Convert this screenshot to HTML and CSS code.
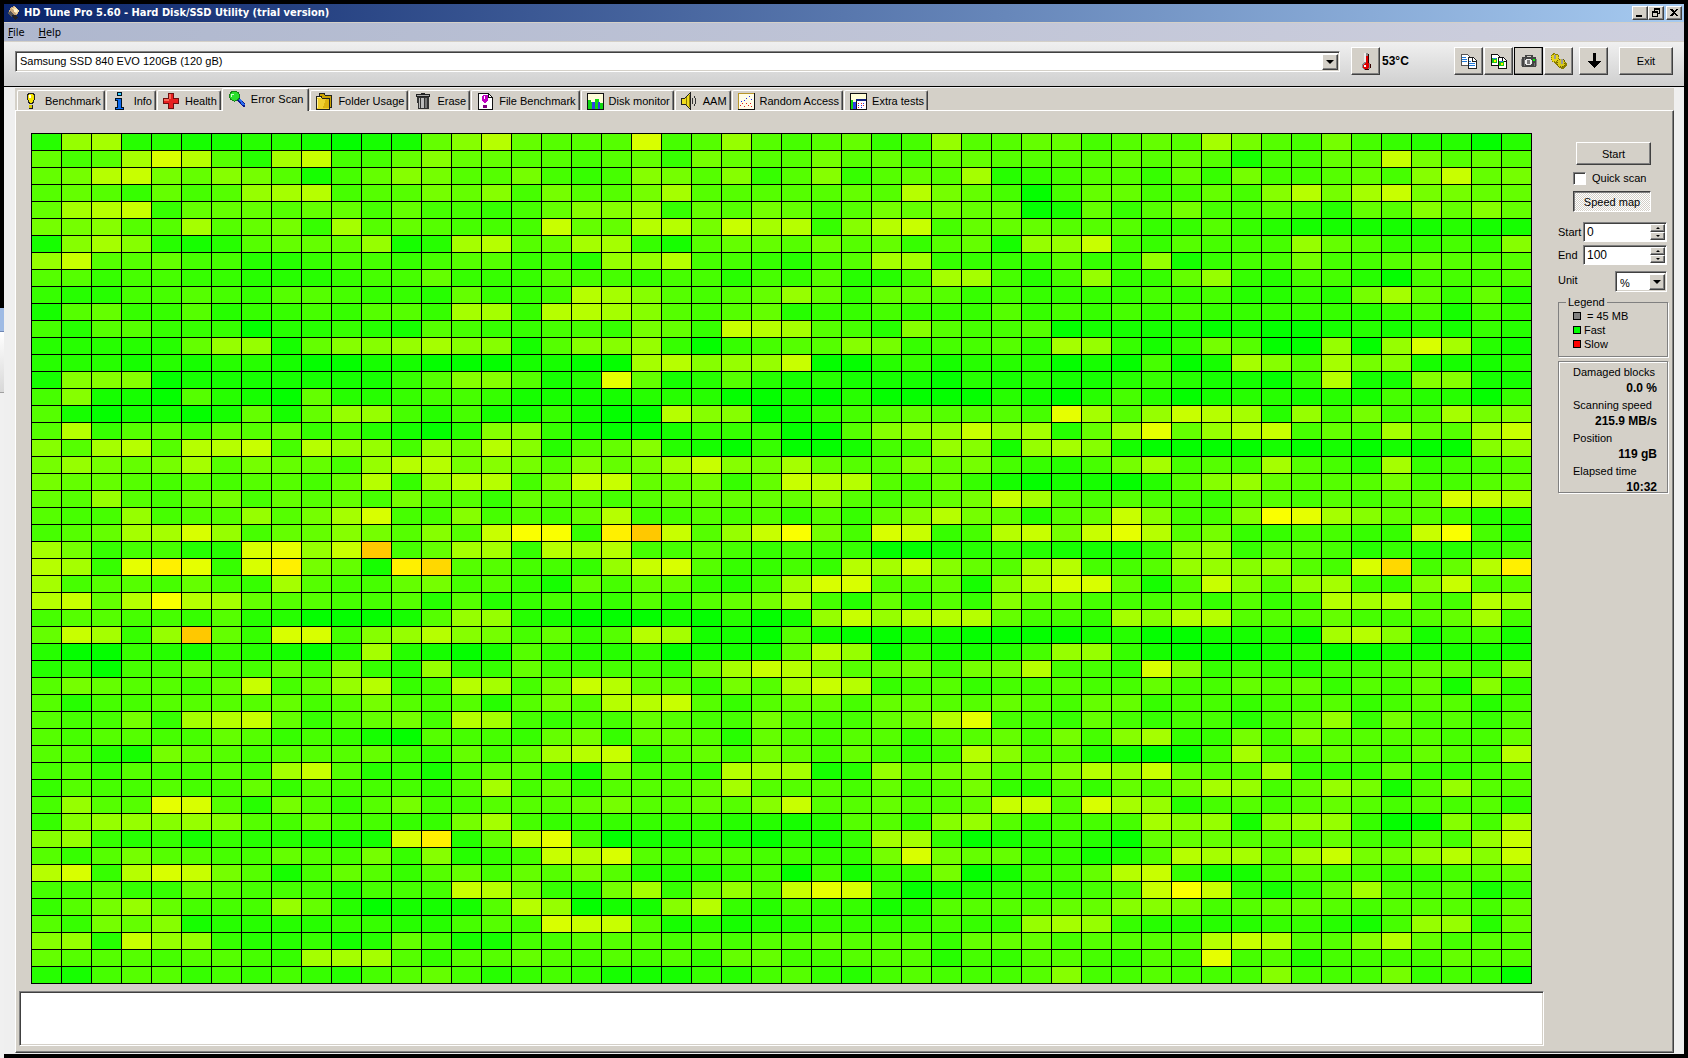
FILE: index.html
```html
<!DOCTYPE html>
<html lang="en">
<head>
<meta charset="utf-8">
<title>HD Tune Pro 5.60</title>
<link rel="stylesheet" href="styles.css">
</head>
<body>
<div class="desktop">
  <div class="behind"><span class="behind-title"></span><span class="behind-bar"></span><span class="behind-body"></span></div>
  <div class="window">
    <header class="titlebar">
      <svg class="app-icon" viewBox="0 0 14 14" width="14" height="14"><path d="M3 2l4-2 5 4-2 5-4 1-4-4z" fill="#c9a77c"/><path d="M5 2l3-1 4 4-3 3z" fill="#f1d9a4"/><path d="M7 3h3v3H7z" fill="#fff3cf"/><path d="M0 7l4-2 3 4-3 2z" fill="#555"/><path d="M5 9h4l2 3-3 2z" fill="#222"/></svg>
      <h1>HD Tune Pro 5.60 - Hard Disk/SSD Utility (trial version)</h1>
      <div class="win-buttons">
        <button class="raised" aria-label="Minimize"><svg viewBox="0 0 10 10" width="10" height="10"><path d="M1 7h6v2H1z"/></svg></button>
        <button class="raised" aria-label="Restore"><svg viewBox="0 0 10 10" width="10" height="10"><path d="M3 0h6v6H7V5h1V2H4v1H3zM1 3h6v6H1zm1 2v3h4V5z" fill-rule="evenodd"/></svg></button>
        <button class="raised close" aria-label="Close"><svg viewBox="0 0 10 10" width="10" height="10"><path d="M1 1h2l2 2 2-2h2L6 4.500l3 3.500H7L5 6 3 8H1l3-3.500z"/></svg></button>
      </div>
    </header>
    <nav class="menubar"><a href="#file"><u>F</u>ile</a><a href="#help"><u>H</u>elp</a></nav>
    <div class="toolbar">
      <div class="combo drive">
        <select aria-label="Drive"><option>Samsung SSD 840 EVO 120GB (120 gB)</option></select>
        <span class="drop raised"></span>
      </div>
      <button class="tool raised" aria-label="Temperature"><svg viewBox="0 0 16 18" width="16" height="18"><path d="M6 1h4v9l2 2v4l-2 2H6l-2-2v-4l2-2z" fill="#888"/><path d="M6 1h2v9H6z" fill="#eee"/><path d="M8 4h2v7l1 1v4l-2 1H6l-1-1v-3l3-2z" fill="#e00000"/><path d="M10 2h1v9h-1zM12 12h1v4h-1zM7 17h4v1H7z" fill="#300"/><path d="M6 13h2v2H6z" fill="#fff"/></svg></button>
      <output class="temp">53°C</output>
      <div class="tools">
        <button class="tool raised" aria-label="Copy text"><svg viewBox="0 0 17 16" width="17" height="16"><path d="M1 1h6l2 2v9H1z" fill="#fff" stroke="#555"/><path d="M8 4h5l3 3v8H8z" fill="#fff" stroke="#222"/><path d="M12 4v4h4" fill="none" stroke="#222"/><path d="M2 4h4v1H2zM2 6h5v1H2zM2 8h5v1H2zM9 8h2v1H9zM9 10h6v1H9zM9 12h6v1H9z" fill="#1f78d8"/></svg></button>
        <button class="tool raised" aria-label="Copy screenshot"><svg viewBox="0 0 17 16" width="17" height="16"><path d="M1 1h6l2 2v9H1z" fill="#fff" stroke="#111"/><path d="M8 4h5l3 3v8H8z" fill="#fff" stroke="#111"/><path d="M12 4v4h4" fill="none" stroke="#111"/><path d="M2 5h5v5H2zM9 8h5v5H9z" fill="#18c818"/><path d="M3 5h3v1H3zM10 8h3v1h-3z" fill="#2878f0"/><path d="M4 7h2v2H4zM11 10h2v2h-2z" fill="#fff200"/></svg></button>
        <button class="tool raised focused" aria-label="Save screenshot"><svg viewBox="0 0 16 14" width="16" height="14"><path d="M1 3h3V1h8v2h3v10H1z" fill="#444"/><path d="M6 2h4v1H6z" fill="#d4d0c8"/><path d="M0 5h1v7H0zM15 5h1v7h-1z" fill="#888"/><path d="M3 4h1v8H3zM13 9h1v3h-1z" fill="#777"/><circle cx="7.500" cy="8" r="3.500" fill="#eee"/><circle cx="7.500" cy="8" r="2" fill="#777"/><path d="M12 5h2v2h-2z" fill="#0f0"/></svg></button>
        <button class="tool raised" aria-label="Options"><svg viewBox="0 0 17 16" width="17" height="16"><path d="M2 1l2-1 4 2 1 4 4 1 4 3v3l-4 3-4-1-2-3-3-2-3-3z" fill="#8a7c00"/><circle cx="5" cy="5" r="4" fill="#e6d51c" stroke="#8a7c00" stroke-dasharray="1 1"/><circle cx="11" cy="10" r="4" fill="#d8c818" stroke="#6a5e00" stroke-dasharray="1 1"/><path d="M4 2h2v4H4zM11 6h2v5h-2z" fill="#999"/></svg></button>
      </div>
      <button class="tool raised save" aria-label="Minimize to tray"><svg viewBox="0 0 14 16" width="14" height="16"><path d="M6 0h3v8h5l-6 7h-1L1 8h5z"/></svg></button>
      <button class="exit raised">Exit</button>
    </div>
    <main class="body">
      <div class="tabs" role="tablist">
        <button role="tab" class="tab"><svg viewBox="0 0 18 18"><path d="M6 1h5l2 2v4l-2 5H7L5 7V3z" fill="#222"/><path d="M7 2h3l2 2v3l-2 4H8L6 7V4z" fill="#f6e600"/><path d="M7 3h2v3H7z" fill="#fff"/><path d="M7 13h4v4H7z" fill="#222"/><path d="M7 13h3v3H7z" fill="#d8c800"/></svg>Benchmark</button>
        <button role="tab" class="tab"><svg viewBox="0 0 18 18"><path d="M6 0h5v4H6zM4 6h7v9h2v3H4v-3h2V9H4z" fill="#012"/><path d="M7 1h3v2H7z" fill="#3ad0ff"/><path d="M5 7h5v9h2v1H5v-1h2V8H5z" fill="#0a6af0"/></svg>Info</button>
        <button role="tab" class="tab"><svg viewBox="0 0 18 18"><path d="M6 1h6v5h5v6h-5v5H6v-5H1V6h5z" fill="#701010"/><path d="M7 2h4v5h5v4h-5v5H7v-5H2V7h5z" fill="#e62020"/><path d="M7 2h2v5H2v2h5z" fill="#f86a5a"/></svg>Health</button>
        <button role="tab" class="tab active" aria-selected="true"><svg viewBox="0 0 18 18"><path d="M9 9l2-1 6 6v3h-2l-6-6z" fill="#0a1a8c"/><path d="M11 9l5 6" stroke="#2a6cf0" stroke-width="2"/><circle cx="6.500" cy="6" r="5.500" fill="#168016"/><circle cx="6.500" cy="6" r="4.500" fill="#2ce02c"/><path d="M3 4h3v1H4v2H3z" fill="#c8ffc8"/></svg>Error Scan</button>
        <button role="tab" class="tab"><svg viewBox="0 0 18 18"><path d="M4 1h5l1 2h6v12H4z" fill="#caa200" stroke="#222"/><path d="M1 4h5l1 2h7v11H1z" fill="#f0cf30" stroke="#222"/><path d="M2 7h1v9H2zM2 5h4v1H2z" fill="#fff3a0"/><path d="M11 7h3v9H8z" fill="#dcb210"/></svg>Folder Usage</button>
        <button role="tab" class="tab"><svg viewBox="0 0 18 18"><path d="M2 2h5V1h4v1h5v3H2z" fill="#222"/><path d="M3 3h12v1H3z" fill="#aaa"/><path d="M3 5h12v12H4z" fill="#333"/><path d="M5 6h1v10H5zM7 6h3v10H7z" fill="#bbb"/><path d="M11 6h2v10h-2z" fill="#777"/></svg>Erase</button>
        <button role="tab" class="tab"><svg viewBox="0 0 18 18"><path d="M2 1h10l4 4v12H2z" fill="#fff" stroke="#111"/><path d="M12 1v4h4" fill="none" stroke="#111"/><path d="M7 3h4l1 1v4l-2 3H8L6 8V4z" fill="#c000c0"/><path d="M7 13h4v3H7z" fill="#800080"/><path d="M8 4h1v3H8z" fill="#fff"/></svg>File Benchmark</button>
        <button role="tab" class="tab"><svg viewBox="0 0 18 18"><path d="M1 1h16v16H1z" fill="#fffdd8" stroke="#111"/><path d="M2 8h3v2h2v7H2zM9 7h4v4h4v6H9z" fill="#10d810"/><path d="M6 10h3v7H6zM12 10h2v7h-2z" fill="#3040e8"/></svg>Disk monitor</button>
        <button role="tab" class="tab"><svg viewBox="0 0 18 18"><path d="M1 6h4l5-5v16l-5-5H1z" fill="#f0dc20" stroke="#222"/><path d="M6 5h1v8H6zM9 3h1v12H9z" fill="#8a7a00"/><path d="M12 6q2 3 0 6M14 4q4 5 0 10" fill="none" stroke="#333"/></svg>AAM</button>
        <button role="tab" class="tab"><svg viewBox="0 0 18 18"><path d="M1 1h16v16H1z" fill="#fffde8" stroke="#b8962a"/><path d="M17 1v16H1" fill="none" stroke="#111"/><path d="M4 9h1v1H4zM7 8h1v1H7zM9 6h1v1H9zM12 4h1v1h-1zM14 7h1v1h-1z" fill="#2030e8"/><path d="M3 13h1v1H3zM5 11h1v1H5zM7 14h1v1H7zM9 11h1v1H9zM11 13h1v1h-1zM13 11h1v1h-1zM14 14h1v1h-1z" fill="#e02020"/></svg>Random Access</button>
        <button role="tab" class="tab"><svg viewBox="0 0 18 18"><path d="M1 1h16v16H1z" fill="#fffdd8" stroke="#111"/><path d="M2 8h2v9H2z" fill="#10d810"/><path d="M4 10h3v7H4z" fill="#3040e8"/><path d="M7 7h10v10H7z" fill="#fff" stroke="#111"/><path d="M7 7h10v2H7z" fill="#102080"/><path d="M9 11h1v1H9zM12 11h1v1h-1zM14 13h1v1h-1zM9 15h1v1H9z" fill="#e02020"/><path d="M14 11h1v1h-1zM9 13h1v1H9zM12 13h1v1h-1zM12 15h1v1h-1z" fill="#2030e8"/></svg>Extra tests</button>
      </div>
      <section class="panel">
        <div class="left">
          <div class="map" id="map" role="img" aria-label="Speed map"></div>
          <textarea class="log" aria-label="Log" readonly></textarea>
        </div>
        <aside class="side">
          <button class="start raised">Start</button>
          <label class="check"><input type="checkbox">Quick scan</label>
          <button class="speed">Speed map</button>
          <div class="field"><label for="from">Start</label><div class="spin"><input id="from" type="text" value="0"><span class="arrows"><button class="raised up" aria-label="Increase start"></button><button class="raised down" aria-label="Decrease start"></button></span></div></div>
          <div class="field"><label for="to">End</label><div class="spin"><input id="to" type="text" value="100"><span class="arrows"><button class="raised up" aria-label="Increase end"></button><button class="raised down" aria-label="Decrease end"></button></span></div></div>
          <div class="field unit"><label for="unit">Unit</label><div class="combo"><select id="unit"><option>%</option></select><span class="drop raised"></span></div></div>
          <fieldset class="legend"><legend>Legend</legend>
            <ul><li class="size"><i class="gray"></i>= 45 MB</li><li><i class="fast"></i>Fast</li><li><i class="slow"></i>Slow</li></ul>
          </fieldset>
          <dl class="stats">
            <dt>Damaged blocks</dt><dd>0.0 %</dd>
            <dt>Scanning speed</dt><dd>215.9 MB/s</dd>
            <dt>Position</dt><dd>119 gB</dd>
            <dt>Elapsed time</dt><dd>10:32</dd>
          </dl>
        </aside>
      </section>
    </main>
  </div>
</div>
<script src="map.js"></script>
</body>
</html>
```
FILE: styles.css
```css
* { box-sizing: border-box; }
body {
  margin: 0;
  background: #000;
  color: #000;
  font: 11px/14px "Liberation Sans", Arial, sans-serif;
}
button, input, select, textarea { font: inherit; color: inherit; margin: 0; padding: 0; border: 0; border-radius: 0; }
button { display: flex; align-items: center; justify-content: center; background: #d4d0c8; }
svg { display: block; flex: none; shape-rendering: crispEdges; }
.desktop { display: flex; min-height: 100vh; padding-right: 4px; }

/* sliver of the window that sits behind this one */
.behind { display: flex; flex-direction: column; flex: none; width: 4px; padding-top: 308px; }
.behind-title { height: 24px; background: #9fbbe4; border-bottom: 1px solid #6f87b4; }
.behind-bar { height: 61px; background: linear-gradient(#fff, #d8d8d8); border-bottom: 1px solid #a0a0a0; }
.behind-body { flex: 1; background: #f0f0f0; }

.window { display: flex; flex-direction: column; flex: 1; min-width: 0; margin: 4px 0; background: #efefef; }
.raised { border: 1px solid; border-color: #fff #404040 #404040 #fff; box-shadow: inset -1px -1px #808080; }

.titlebar {
  display: flex; align-items: center; height: 19px; padding: 0 2px 0 3px;
  background: linear-gradient(90deg, #0a246a, #a6caf0);
  border-bottom: 1px solid #d4d0c8;
}
.titlebar h1 { flex: 1; margin: 0 0 0 3px; color: #fff; font: bold 11px/18px "DejaVu Sans Condensed", "DejaVu Sans", sans-serif; }
.win-buttons { display: flex; }
.win-buttons button { width: 16px; height: 14px; }
.win-buttons .close { margin-left: 2px; }

.menubar {
  display: flex; gap: 14px; height: 19px; padding: 0 4px; border-bottom: 1px solid #d4d0c8;
  background: linear-gradient(90deg, #aeb7ce, #cfd0de);
  font: 11px/20px "DejaVu Sans Condensed", "DejaVu Sans", sans-serif;
}
.menubar a { color: #000; text-decoration: none; }

.toolbar {
  display: flex; align-items: center; height: 45px; padding: 0 11px 6px; border-bottom: 1px solid #000;
  background: linear-gradient(#f0f0f0, #cfcfcf);
}
.combo {
  display: flex; height: 21px; background: #fff; border: 1px solid; border-color: #808080 #fff #fff #808080;
  box-shadow: inset 1px 1px #404040, inset -1px -1px #d4d0c8; padding: 2px 1px 1px 2px;
}
.combo select { flex: 1; min-width: 0; appearance: none; background: none; padding: 0 0 2px 2px; }
.drop { display: flex; align-items: center; justify-content: center; width: 16px; background: #d4d0c8; }
.drop::before { content: ""; border: 4px solid transparent; border-top-color: #000; border-bottom: 0; }
.drive { flex: 1; margin-right: 11px; }
.tool { width: 29px; height: 28px; }
.focused { outline: 1px solid #000; outline-offset: -1px; }
.temp { width: 74px; padding-left: 2px; font-size: 12px; font-weight: bold; }
.tools { display: flex; gap: 1px; }
.save { margin: 0 11px 0 6px; }
.exit { width: 54px; height: 28px; }

.body { display: flex; flex-direction: column; flex: 1; margin: 1px 10px 1px 11px; }
.tabs { display: flex; align-items: flex-end; gap: 1px; height: 22px; padding-left: 2px; background: #d4d0c8; }
.tab {
  gap: 5px; height: 20px; padding: 0 3px 0 4px;
  border: solid; border-width: 1px 1px 0; border-color: #fff #404040 #fff #fff;
  box-shadow: inset -1px 0 #808080; border-radius: 2px 2px 0 0;
}
.tab svg { width: 18px; height: 18px; }
.tab.active { height: 23px; margin-bottom: -1px; padding: 0 5px 3px; z-index: 1; }

.panel {
  display: flex; flex: 1; gap: 14px; padding: 22px 3px 6px;
  background: #d4d0c8; border: 1px solid; border-color: #fff #404040 #404040 #fff;
  box-shadow: inset -1px -1px #808080;
}
.left { display: flex; flex-direction: column; flex: 1; gap: 7px; min-width: 0; }
.map {
  display: grid; grid-template-columns: repeat(50, 1fr); grid-auto-rows: 16px; gap: 1px;
  margin: 0 12px; padding: 1px; background: #000;
}
.log {
  flex: 1; min-height: 54px; resize: none; background: #fff;
  border: 1px solid; border-color: #808080 #fff #fff #808080;
  box-shadow: inset 1px 1px #404040, inset -1px -1px #d4d0c8;
}

.side { display: flex; flex-direction: column; flex: none; width: 112px; padding-top: 9px; }
.start { width: 75px; height: 23px; margin-left: 18px; }
.check { display: flex; align-items: center; gap: 6px; margin: 6px 0 6px 15px; }
.check input {
  width: 13px; height: 13px; appearance: none; background: #fff;
  border: 1px solid; border-color: #808080 #fff #fff #808080; box-shadow: inset 1px 1px #404040;
}
.speed {
  width: 78px; height: 21px; margin: 0 0 10px 15px;
  border: 1px solid; border-color: #404040 #fff #fff #404040; box-shadow: inset 1px 1px #808080;
  background: repeating-conic-gradient(#fff 0 25%, #d4d0c8 0 50%) 0 0 / 2px 2px;
}
.field { display: flex; justify-content: space-between; margin: 0 3px 3px 0; line-height: 20px; }
.spin {
  display: flex; width: 84px; height: 20px; padding: 1px; background: #fff;
  border: 1px solid; border-color: #808080 #fff #fff #808080; box-shadow: inset 1px 1px #404040;
}
.spin input { flex: 1; min-width: 0; padding-left: 2px; background: none; font-size: 12px; outline: 0; }
.arrows { display: flex; flex-direction: column; width: 15px; }
.arrows button { flex: 1; }
.arrows button::before { content: ""; border: 0 solid transparent; border-width: 0 2px; }
.arrows .up::before { border-bottom: 2px solid #000; }
.arrows .down::before { border-top: 2px solid #000; }
.unit { margin: 3px 3px 4px 0; line-height: 18px; }
.unit .combo { width: 52px; }

.legend { height: 61px; margin: 0 2px 4px 0; padding: 0 14px; border: 1px solid #808080; box-shadow: 1px 1px #fff; }
.legend legend { margin-left: -7px; padding: 0 2px; line-height: 13px; }
.legend ul { margin: 0; padding: 0; list-style: none; }
.legend li { display: flex; align-items: center; gap: 3px; }
.legend .size { gap: 6px; }
.legend i { width: 8px; height: 8px; border: 1px solid #000; }
.gray { background: #808080; }
.fast { background: #0f0; }
.slow { background: #f00; }

.stats { height: 132px; margin: 0 2px 0 0; padding: 2px 10px 0 14px; border: 1px solid #808080; box-shadow: 1px 1px #fff, inset 1px 1px #fff; }
.stats dt { line-height: 16px; }
.stats dd { margin: 0; font-size: 12px; font-weight: bold; line-height: 17px; text-align: right; }

.map .h0 { background: #04ff00; }
.map .h1 { background: #16ff00; }
.map .h2 { background: #26ff00; }
.map .h3 { background: #36ff00; }
.map .h4 { background: #46ff00; }
.map .h5 { background: #55ff00; }
.map .h6 { background: #64ff00; }
.map .h7 { background: #75ff00; }
.map .h8 { background: #86ff00; }
.map .h9 { background: #96ff00; }
.map .hA { background: #a5ff00; }
.map .hB { background: #b6ff00; }
.map .hC { background: #c8ff00; }
.map .hD { background: #d8ff00; }
.map .hE { background: #e6ff00; }
.map .hF { background: #faff00; }
.map .hG { background: #fff000; }
.map .hH { background: #ffd800; }
.map .hI { background: #ffc800; }
```
FILE: map.js
```js
// One character per block: 0 is the fastest (green), F is yellow, G to I go towards orange.
const blocks = `
29A22 11221 01168 B6555 D4595 45634 95566 4565A 75474 32202
645AD B52AC 44686 65545 63765 57564 66555 56565 14466 C7565
67BC7 68751 46875 57434 87583 58356 5A234 55363 74456 48C67
56536 459AB 45576 84755 7A555 5565B 76404 66446 48B7A C7766
6ABC3 66656 64644 34688 93657 64576 76601 63574 45426 58686
77855 A5673 A5654 44C66 BB7CA B38BC 46665 55335 32111 11211
18A82 12566 6912A B56AA 31566 57563 56199 C4354 44965 33438
9C556 44223 44345 53429 9B443 245AA 33335 33913 44744 56555
55344 33222 34463 33544 34424 35224 AA424 93369 32442 04445
32244 54355 43326 334BA 85456 96366 53433 33434 22327 A6362
15633 52334 3553A A3BBA 85456 23343 33534 34343 33332 34143
42553 33022 32154 33443 763CB A5428 54450 11110 10012 12132
22222 69916 889A8 81588 93034 55873 4453A 93137 50090 9DA21
22212 12210 01100 01100 AB899 C0023 12220 10401 A85A7 81112
18880 11111 11358 8512E 61252 12111 02121 12321 103B1 18811
48110 52106 22344 31111 22200 10200 00210 24201 22121 42203
51011 01616 99424 11310 0B880 13456 5554E A59CB A2947 45A78
5B355 46563 42102 88310 01333 00589 9C9A2 6AE69 BC464 A65AC
85AB5 BBC4B 99497 B8256 82103 00144 9819A 81000 01010 10089
79767 A5766 49BB7 87586 7AC87 A6558 67432 47A45 4A542 A3445
76654 54554 6B39B B47CC 66736 CBB54 63101 10258 96555 74456
65954 67465 64755 36554 56666 68545 67CA5 45443 55454 56DCB
54494 55957 AD448 4546B 44545 35368 B7625 6C844 8FEA8 65422
456AA D9466 87585 CFF3G IC59C F74DC 34BC7 CEB57 33443 3CF42
A7344 22DE9 CI46A A3BAB 44543 43300 12321 11389 35542 32234
BA3EG E3DG7 61GH5 54439 CD533 43BAC 865AB 44599 8954D H46BG
A4554 643A5 44674 53164 66324 ADD55 618BD D615C 859A4 38C55
BC6BF BA655 44525 23433 53567 A4263 53866 44453 534BA B54BA
45544 35220 00159 92100 01020 19C9B BB644 3A8BB 55564 456A4
6CA39 I63DD 489B8 74635 BA110 51001 10000 12001 120AB 81341
20032 13210 2A210 15322 30111 6B903 11249 93100 01200 11111
23044 64464 83293 36444 437AC B8567 477B4 43D83 43244 56648
57655 46C46 9B34B A47CB 66375 ACB34 53445 44644 65635 46183
52445 55564 57545 2575B BC535 66466 55654 66344 34453 45524
54473 ABC63 5674B A4344 65447 54467 BE443 64344 24693 74535
54554 46534 31054 43673 66526 54553 55647 48A33 74855 55446
55217 65455 56436 46ABC 35647 64643 4B855 21004 A5465 4654B
45354 454AC 52314 65317 443BA A1296 78568 B9C65 5A333 63345
35445 44635 44435 A4635 556A5 55464 57325 3657A 94697 15955
4955E D5275 35744 55567 55658 C5565 56CC5 DA924 54565 45453
38998 98546 44337 A4333 33322 12553 89534 44A89 18993 0084A
89323 13221 11DG2 6CE40 11210 213AA 30123 20666 55464 3649C
53575 54465 47382 34CBD 54554 4337D 76633 125BA A6AC7 79B8C
BD3BD C7514 65356 46575 22234 04133 70144 6BC31 14544 33456
44533 65444 2444C B7327 A3796 CED40 12333 45CFC 3136A 54513
35796 44496 20111 5B901 18B32 43312 55556 68874 56654 55546
53768 12222 33224 54DCC 51212 23333 4339A 93222 23321 49926
892C9 93223 12641 14455 54545 56555 36664 5555B CB558 B6455
65554 5543A AA535 56545 45366 44555 24355 4354E 45244 44655
21455 34343 24564 23431 11324 53245 44458 44544 48444 73430
`.replace(/\s/g, "");

const map = document.getElementById("map");
for (const level of blocks) {
  const block = document.createElement("span");
  block.className = "h" + level;
  map.append(block);
}
```
